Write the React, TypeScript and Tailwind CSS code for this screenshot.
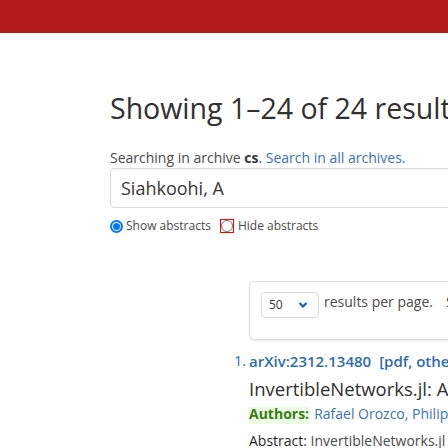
export default function App() {
  return (
    <div className="h-[448px] w-[448px] overflow-hidden bg-white font-['Open_Sans',sans-serif] text-[#363636]">
      <div className="h-[33px] bg-[#b31b1b]" />
      <div className="pl-[110px]">
        <h1 className="mt-[57px] whitespace-nowrap text-[28.5px] leading-[36px] text-[#303030]">
          Showing 1–24 of 24 results for author: Siahkoohi, A
        </h1>
        <p className="mt-[23px] whitespace-nowrap text-[14px] leading-[18px] text-[#4a4a4a]">
          Searching in archive <b className="text-[#363636]">cs</b>.{" "}
          <a href="#" className="text-[#3a72b6]">Search in all archives.</a>
        </p>
        <div className="mt-[1px] flex h-[40px] w-[520px] items-center rounded-[4px] border border-[#dbdbdb] px-[10px] text-[18px] text-[#363636] shadow-[inset_0_1px_2px_rgba(10,10,10,0.06)]">
          Siahkoohi, A
        </div>
        <div className="mt-[10px] flex h-[16px] items-center whitespace-nowrap text-[12px] leading-[16px] text-[#4a4a4a]">
          <span className="mr-[3px] flex h-[13px] w-[13px] shrink-0 items-center justify-center rounded-full bg-[#0075ff]">
            <span className="flex h-[9px] w-[9px] items-center justify-center rounded-full bg-white">
              <span className="h-[7px] w-[7px] rounded-full bg-[#0075ff]" />
            </span>
          </span>
          Show abstracts
          <span className="ml-[9px] mr-[4px] flex h-[14px] w-[14px] shrink-0 items-center justify-center border border-[#ff0000]">
            <span className="h-[12px] w-[12px] rounded-full border border-[#767676]" />
          </span>
          Hide abstracts
        </div>

        <div className="ml-[139px] mt-[47px] h-[59px] w-[600px] rounded-[6px] border border-[#e1e1e1] px-[11px] pt-[10px] shadow-[0_1px_2px_rgba(10,10,10,0.1)]">
          <div className="flex items-start whitespace-nowrap">
            <div className="flex h-[26px] w-[58px] shrink-0 items-center justify-between rounded-[4px] border border-[#dbdbdb] pl-[7px] pr-[10px] text-[12px] text-[#363636]">
              50
              <svg width="10" height="6" viewBox="0 0 10 6">
                <path d="M1.5 1 5 4.5 8.5 1" fill="none" stroke="#1d5fa8" strokeWidth="2.2" />
              </svg>
            </div>
            <span className="ml-[5px] text-[14px] leading-[20px] text-[#4a4a4a]">results per page.</span>
            <span className="ml-[13px] text-[14px] leading-[20px] text-[#4a4a4a]">Sort results by:</span>
          </div>
        </div>

        <div className="mt-[11px] flex whitespace-nowrap">
          <span className="ml-[124px] w-[15px] shrink-0 text-[14.5px] leading-[20px] text-[#2e6bb0]">1.</span>
          <div className="shrink-0">
            <p className="text-[15px] leading-[20px] font-semibold text-[#2e6bb0]">
              <a href="#">arXiv:2312.13480</a>
              <span className="ml-[8px]">[pdf, other]</span>
            </p>
            <p className="mt-[6px] text-[18.5px] leading-[24px] text-[#303030]">
              InvertibleNetworks.jl: A Julia package for scalable normalizing flows
            </p>
            <p className="mt-[6px] flex h-[17px] items-start text-[14px]">
              <span className="inline-block bg-[#eafde2] pb-[4px] pr-[1px] font-bold leading-[13px] text-[#3a7b14]">
                Authors:
              </span>
              <a href="#" className="ml-[4px] leading-[13px] text-[#3b72b6]">
                Rafael Orozco, Philipp Witte, Mathias Louboutin
              </a>
            </p>
            <p className="mt-[8px] text-[14px] leading-[18px] text-[#4a4a4a]">
              <span className="text-[#1f1f2a]">Abstract</span>: InvertibleNetworks.jl is a Julia package
            </p>
          </div>
        </div>
      </div>
    </div>
  )
}
